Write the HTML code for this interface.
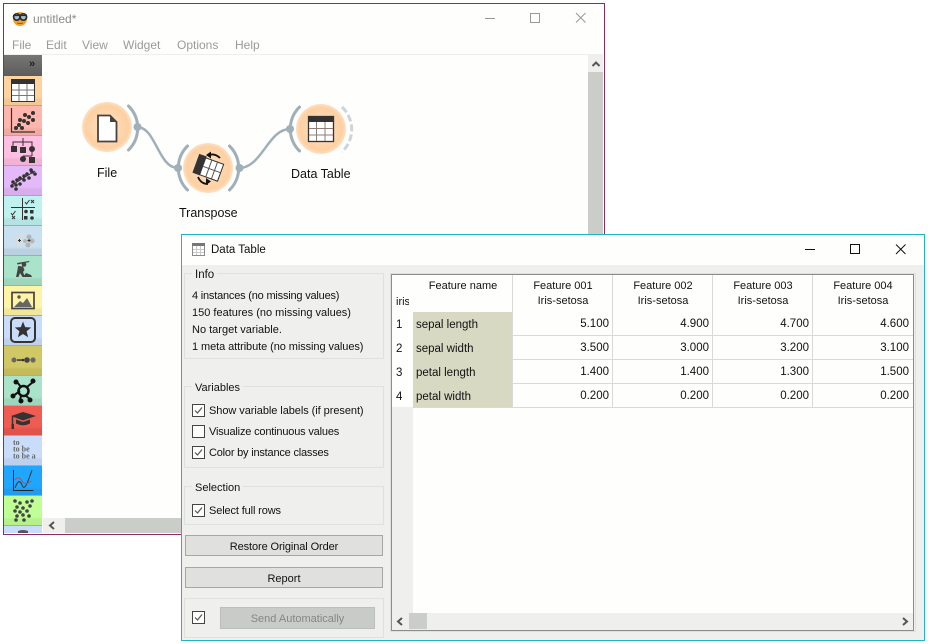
<!DOCTYPE html>
<html><head><meta charset="utf-8"><style>
html,body{margin:0;padding:0;background:#fff}
#r{position:relative;width:928px;height:644px;overflow:hidden;background:#fff;font-family:"Liberation Sans",sans-serif;font-size:11.5px;color:#111}
.a{position:absolute;white-space:nowrap}
.t{position:absolute;left:4px;width:38px;height:30px;box-sizing:border-box;border-bottom:1px solid #a9aaa8}
.box{position:absolute;left:184px;width:198px;border:1px solid #dfe1de;background:#eff0ee}
.lg{position:absolute;background:#eff0ee;padding:0 3px;left:192px;line-height:14px;font-size:11px}
.cb{position:absolute;left:192px;width:11px;height:11px;border:1px solid #444;background:#fdfdfb}
.cb svg{position:absolute;left:0;top:0}
.btn{position:absolute;left:185px;width:196px;height:19px;border:1px solid #a5a7a4;background:#e0e1de;text-align:center;line-height:22px;font-size:11px}
.h{position:absolute;text-align:center;width:100px;line-height:15px;font-size:11px}
.v{position:absolute;text-align:right;width:96px;line-height:14px;font-size:11px}
.m{position:absolute;top:38px;color:#9a9a9a;font-size:12px;line-height:14px}
.l{position:absolute;background:#d9dad8}
.x{position:absolute;white-space:nowrap;line-height:14px;font-size:11px}
.nl{position:absolute;white-space:nowrap;font-size:12.500px;line-height:14px}
</style></head><body><div id="r">

<!-- back window -->
<div class="a" style="left:3px;top:3px;width:600px;height:530px;border:1px solid #8c2c62;background:#fefefc"></div>
<svg class="a" style="left:12px;top:10px" width="17" height="16" viewBox="0 0 17 16"><circle cx="8" cy="9" r="7" fill="#f2a12e"/><circle cx="4.800" cy="7" r="3.200" fill="#9fc4d6" stroke="#2c2c2c" stroke-width="1.700"/><circle cx="11.400" cy="7" r="3.200" fill="#9fc4d6" stroke="#2c2c2c" stroke-width="1.700"/><path d="M1 5.500H15" stroke="#2c2c2c" stroke-width="1.200"/><path d="M5 13q3 1 6 0" stroke="#a4541a" fill="none"/></svg>
<div class="a" style="left:33px;top:12px;font-size:12px;color:#8a8a8a;line-height:14px">untitled*</div>
<div class="m" style="left:12px">File</div>
<div class="m" style="left:46px">Edit</div>
<div class="m" style="left:82px">View</div>
<div class="m" style="left:123px">Widget</div>
<div class="m" style="left:177px">Options</div>
<div class="m" style="left:235px">Help</div>
<div class="a" style="left:4px;top:54px;width:599px;height:1px;background:#eeeeec"></div>
<svg class="a" style="left:480px;top:8px" width="110" height="20" fill="none" stroke="#999"><path d="M5 10.500H15"/><rect x="50.500" y="5.500" width="9" height="9"/><path d="M96 5l9.500 9.500M105.500 5L96 14.500"/></svg>

<!-- canvas scrollbars -->
<div class="a" style="left:588px;top:55px;width:15px;height:17px;background:#eff0ee"></div>
<div class="a" style="left:588px;top:72px;width:15px;height:170px;background:#cbcdc9"></div>
<svg class="a" style="left:591px;top:59px" width="10" height="9"><path d="M1.500 7L5 3.500 8.500 7" fill="none" stroke="#555" stroke-width="2"/></svg>
<div class="a" style="left:43px;top:518px;width:22px;height:15px;background:#eff0ee"></div>
<div class="a" style="left:65px;top:518px;width:118px;height:15px;background:#cbcdc9"></div>
<svg class="a" style="left:47px;top:520px" width="10" height="11"><path d="M7 2L3 5.500 7 9" fill="none" stroke="#555" stroke-width="2"/></svg>

<!-- toolbox -->
<div class="a" style="left:4px;top:55px;width:38px;height:21px;background:linear-gradient(#767674,#5c5c5a)"></div>
<div class="a" style="left:29px;top:58px;font-size:11px;font-weight:bold;color:#222;line-height:12px">»</div>
<div class="t" style="top:76px;background:linear-gradient(#ffd39f 72%,#f4c893 82%)"></div>
<div class="t" style="top:106px;background:linear-gradient(#ffb6ad 72%,#f3aaa1 82%)"></div>
<div class="t" style="top:136px;background:linear-gradient(#ffbfe2 72%,#f2b2d5 82%)"></div>
<div class="t" style="top:166px;background:linear-gradient(#e3b9f9 72%,#d7adec 82%)"></div>
<div class="t" style="top:196px;background:linear-gradient(#bff2ee 72%,#b2e5e1 82%)"></div>
<div class="t" style="top:226px;background:linear-gradient(#c9e0f0 72%,#bbd1e2 82%)"></div>
<div class="t" style="top:256px;background:linear-gradient(#a9e3c9 72%,#9dd6bc 82%)"></div>
<div class="t" style="top:286px;background:linear-gradient(#fdf4a6 72%,#f0e799 82%)"></div>
<div class="t" style="top:316px;background:linear-gradient(#c9ddfb 72%,#bdd1ef 82%)"></div>
<div class="t" style="top:346px;background:linear-gradient(#d0c865 72%,#c3bb59 82%)"></div>
<div class="t" style="top:376px;background:linear-gradient(#a9e3c9 72%,#9dd6bc 82%)"></div>
<div class="t" style="top:406px;background:linear-gradient(#ee5c52 72%,#e0524a 82%)"></div>
<div class="t" style="top:436px;background:linear-gradient(#c9ddfb 72%,#bdd1ef 82%)"></div>
<div class="t" style="top:466px;background:linear-gradient(#1fa6ff 72%,#1d9df1 82%)"></div>
<div class="t" style="top:496px;background:linear-gradient(#c0ff96 72%,#b4f18a 82%)"></div>
<div class="t" style="top:526px;height:7px;background:#c9ddfb;border:0"></div>

<svg class="a" style="left:4px;top:55px" width="38" height="478" viewBox="0 0 38 478">
 <!-- table -->
 <rect x="7.500" y="24.500" width="23" height="22" fill="#fff" stroke="#333"/><rect x="7" y="24" width="24" height="5" fill="#333"/><path d="M15 29V46M23 29V46M8 35H30M8 40.500H30" stroke="#777"/>
 <!-- scatter -->
 <path d="M7.500 53V77H31" fill="none" stroke="#333" stroke-width="1.200"/>
 <g fill="#333"><circle cx="12" cy="73" r="2"/><circle cx="15" cy="70" r="2"/><circle cx="18" cy="73" r="2"/><circle cx="20" cy="66" r="2"/><circle cx="16" cy="65" r="2"/><circle cx="24" cy="68" r="2"/><circle cx="25" cy="62" r="2"/><circle cx="29" cy="65" r="2"/><circle cx="29" cy="58" r="2"/><circle cx="21" cy="60" r="2"/></g>
 <!-- tree -->
 <g fill="#333"><path d="M19 83V87M9 91V87H28V91M19 87V91M28 96V101M19 101H28" stroke="#333" fill="none"/><rect x="7" y="91" width="6" height="6"/><rect x="16" y="92" width="6" height="6"/><circle cx="28" cy="94" r="3"/><circle cx="19" cy="104" r="3"/><rect x="25" y="102" width="6" height="6"/></g>
 <!-- regression -->
 <g fill="#333"><path d="M8 130L31 116" stroke="#333"/><circle cx="9" cy="127" r="1.800"/><circle cx="8" cy="131" r="1.800"/><circle cx="12" cy="130" r="1.800"/><circle cx="13" cy="125" r="1.800"/><circle cx="16" cy="123" r="1.800"/><circle cx="16" cy="129" r="1.800"/><circle cx="20" cy="125" r="1.800"/><circle cx="20" cy="121" r="1.800"/><circle cx="23" cy="119" r="1.800"/><circle cx="25" cy="123" r="1.800"/><circle cx="28" cy="117" r="1.800"/><circle cx="31" cy="119" r="1.800"/><circle cx="27" cy="115" r="1.800"/><circle cx="12" cy="134" r="1.800"/></g>
 <!-- eval -->
 <g><path d="M7 152.500H31M18.500 143V165" stroke="#333"/><path d="M21 147l1.500 2 3-4M7 158l1.500 2 3-4" fill="none" stroke="#333"/><path d="M27 145l3 3M30 145l-3 3M8 161l3 3M11 161l-3 3" stroke="#333"/><circle cx="22" cy="156.500" r="1.800" fill="#333"/><rect x="26" y="155" width="3.500" height="3.500" fill="#333"/><rect x="20" y="161" width="3.500" height="3.500" fill="#333"/><circle cx="28" cy="163" r="1.800" fill="#333"/></g>
 <!-- unsupervised -->
 <g fill="#b5b5b5"><circle cx="15" cy="189" r="2.500" fill="#dcdcdc"/><circle cx="12" cy="184" r="2.500" fill="#dcdcdc"/><circle cx="18" cy="181" r="2.500" fill="#dcdcdc"/><circle cx="25" cy="182" r="2.500"/><circle cx="28" cy="186" r="2.500"/><circle cx="24" cy="190" r="2.500"/><circle cx="21" cy="186" r="2"/></g><path d="M14 185.500h3M23.500 185.500h3M25 184v3M15.500 184v3" stroke="#333"/>
 <!-- digger -->
 <g fill="#444"><circle cx="20" cy="209.500" r="2.300"/><path d="M14 211l5 .5 1.500 3.500-1.500 2 2 5h-2.500l-2.500-4-1.500 4h-2.500l1.500-7z"/><path d="M13 208l12-2 .5 1-12 2.500zM19 222l3-4 5 2 1 2z"/></g>
 <!-- image -->
 <rect x="8" y="237.500" width="22" height="16" fill="#fdf4a6" stroke="#444" stroke-width="1.700"/><path d="M10 252l6-6 3 2 4-5 5 9z" fill="#666"/><circle cx="15" cy="242" r="1.700" fill="#555"/>
 <!-- star -->
 <rect x="7" y="263" width="24" height="24" rx="4" fill="#c9ddfb" stroke="#333" stroke-width="2"/><path d="M19 266.500l2.200 5.600 6 .4-4.600 3.800 1.500 5.900-5.100-3.200-5.100 3.200 1.500-5.900-4.600-3.800 6-.4z" fill="#333"/>
 <!-- dots -->
 <g fill="#666"><circle cx="10" cy="305" r="2.500"/><rect x="13" y="304.300" width="6" height="1.500" fill="#333"/><circle cx="19" cy="305" r="1.300" fill="#333"/><circle cx="23" cy="305" r="2.800" fill="#444"/><circle cx="29" cy="305" r="2.600"/></g>
 <!-- network -->
 <g fill="#111" stroke="#111"><path d="M9 341l7-5M29 327l-6 5M13 327l4 5M22 341l4 3M17 341l-1 4" stroke-width="2"/><circle cx="19.500" cy="336" r="5" fill="none" stroke-width="2.500"/><circle cx="12" cy="327" r="2"/><circle cx="29" cy="326" r="2"/><circle cx="9" cy="341" r="2"/><circle cx="17" cy="346" r="2"/><circle cx="26" cy="345" r="2"/></g>
 <!-- edu -->
 <path d="M7 361l12-4 13 4-13 4.500z" fill="#333"/><path d="M12 364.500v4q7 3.500 14 0v-4l-7 2.500z" fill="#333"/><path d="M8.500 361.500v8" stroke="#333" stroke-width="1.500"/><rect x="7.500" y="369" width="2.500" height="5" fill="#333"/>
 <!-- to be -->
 <text x="9" y="390" font-family="Liberation Serif,serif" font-size="8" font-weight="bold" fill="#666">to</text><text x="9" y="396.500" font-family="Liberation Serif,serif" font-size="8" font-weight="bold" fill="#666">to be</text><text x="9" y="403.500" font-family="Liberation Serif,serif" font-size="8" font-weight="bold" fill="#666">to be a</text>
 <!-- timeseries -->
 <path d="M9.500 415V435.500H29.500" fill="none" stroke="#222"/><path d="M11 433c3-8 5-8 7-3s4 3 10-15" fill="none" stroke="#333"/><path d="M11 425c3-4 5-2 7 1s5 4 9 0" fill="none" stroke="#c04a50"/>
 <!-- bio -->
 <g fill="#444"><circle cx="11" cy="446" r="1.800"/><circle cx="16" cy="448" r="1.800"/><circle cx="23" cy="447" r="1.800"/><circle cx="28" cy="446" r="1.800"/><circle cx="13" cy="452" r="1.800"/><circle cx="19" cy="453" r="1.800"/><circle cx="26" cy="451" r="1.800"/><circle cx="11" cy="456" r="1.800"/><circle cx="16" cy="457" r="1.800"/><circle cx="23" cy="456" r="1.800"/><circle cx="13" cy="461" r="1.800"/><circle cx="19" cy="460" r="1.800"/><circle cx="25" cy="461" r="1.800"/><circle cx="12" cy="465" r="1.800"/><circle cx="20" cy="465" r="1.800"/></g>
 <path d="M14 476q5-2 10 0v2H14z" fill="#555"/>
</svg>

<!-- workflow -->
<svg class="a" style="left:60px;top:85px" width="310" height="150" viewBox="60 85 310 150" fill="none">
 <defs><radialGradient id="g"><stop offset="0.300" stop-color="#ffdcb8"/><stop offset="0.850" stop-color="#fdd0a2"/><stop offset="1" stop-color="#fde0c4"/></radialGradient></defs>
 <g stroke="#9fb0b8" stroke-width="2.500"><path d="M137 127C156 127 158 168 178 168"/><path d="M239 168C262 168 268 129 290 129"/></g>
 <g fill="url(#g)"><circle cx="107" cy="127" r="25"/><circle cx="208" cy="168" r="25"/><circle cx="321" cy="129" r="25"/></g>
 <g stroke="#9fb0b8" stroke-width="3" stroke-linecap="round">
  <path d="M128.500 106a31 31 0 0 1 0 44"/>
  <path d="M187.500 146a31 31 0 0 0 0 44"/>
  <path d="M229.500 146a31 31 0 0 1 0 44"/>
  <path d="M299.500 107a31 31 0 0 0 0 44"/>
 </g>
 <path d="M342 107a31 31 0 0 1 0 45" stroke="#ccd5d8" stroke-width="3" stroke-dasharray="7 3"/>
 <g fill="#9fb0b8"><circle cx="137.500" cy="127" r="4"/><circle cx="178" cy="168" r="4"/><circle cx="239.500" cy="168" r="4"/><circle cx="290" cy="129" r="4"/></g>
 <!-- file icon -->
 <path d="M98 115.500H110L116.500 122V141.500H98Z" fill="#fff" stroke="#444" stroke-width="1.800"/><path d="M110 115V122H117Z" fill="#444"/>
 <!-- transpose -->
 <g transform="rotate(20 209 168)"><rect x="197.500" y="159.500" width="24" height="18" fill="#fff" stroke="#333"/><rect x="195" y="158" width="8" height="20" fill="#333"/><path d="M209 160V177M215 160V177M203 168.500H221" stroke="#555"/></g>
 <path d="M209 155q6-2 11 3" stroke="#111" stroke-width="1.800"/><path d="M211 151.500v7l-5-3.500zM206 185v-7l5 3.500z" fill="#111"/><path d="M198 177q3 7 10 7" stroke="#111" stroke-width="1.800"/>
 <!-- table -->
 <rect x="308.500" y="116.500" width="25" height="25" fill="#fff" stroke="#333" stroke-width="1.300"/><rect x="308" y="116" width="26" height="6" fill="#333"/><path d="M316.500 122V141M325 122V141M309 128.500H333M309 135H333" stroke="#8a7f7a"/>
</svg>
<div class="nl" style="left:97px;top:166px">File</div>
<div class="nl" style="left:179px;top:206px">Transpose</div>
<div class="nl" style="left:291px;top:167px">Data Table</div>

<!-- front window -->
<div class="a" style="left:181px;top:234px;width:742px;height:405px;border:1px solid #1fb6c4;background:#eff0ee"></div>
<div class="a" style="left:182px;top:235px;width:742px;height:30px;background:#fefefc"></div>
<svg class="a" style="left:192px;top:243px" width="13" height="13"><rect x=".5" y=".5" width="12" height="12" fill="#fff" stroke="#8a8a8a"/><rect x="0" y="0" width="13" height="3" fill="#777"/><path d="M4.500 3V12M8.500 3V12M1 6.500H12M1 9.500H12" stroke="#c9c9c9"/></svg>
<div class="a" style="left:211px;top:243px;font-size:11.500px;line-height:14px">Data Table</div>
<svg class="a" style="left:800px;top:240px" width="110" height="20" fill="none" stroke="#111"><path d="M5 9.500H15"/><rect x="50.500" y="4.500" width="9" height="9"/><path d="M96 4.500l9.500 9.500M105.500 4.500L96 14"/></svg>

<!-- left panel -->
<div class="box" style="top:273px;height:84px"></div>
<div class="lg" style="top:268px;font-size:11.500px">Info</div>
<div class="x" style="left:192px;top:289px;letter-spacing:-.2px">4 instances (no missing values)</div>
<div class="x" style="left:192px;top:306px">150 features (no missing values)</div>
<div class="x" style="left:192px;top:323px">No target variable.</div>
<div class="x" style="left:192px;top:340px;letter-spacing:-.08px">1 meta attribute (no missing values)</div>

<div class="box" style="top:386px;height:80px"></div>
<div class="lg" style="top:381px">Variables</div>
<div class="cb" style="top:404px"><svg width="11" height="11"><path d="M2 5.500L4.500 8 9 2.500" fill="none" stroke="#555" stroke-width="1.200"/></svg></div>
<div class="x" style="left:209px;top:404px;letter-spacing:-.06px">Show variable labels (if present)</div>
<div class="cb" style="top:425px"></div>
<div class="x" style="left:209px;top:425px;letter-spacing:-.18px">Visualize continuous values</div>
<div class="cb" style="top:446px"><svg width="11" height="11"><path d="M2 5.500L4.500 8 9 2.500" fill="none" stroke="#555" stroke-width="1.200"/></svg></div>
<div class="x" style="left:209px;top:446px;letter-spacing:-.2px">Color by instance classes</div>

<div class="box" style="top:486px;height:37px"></div>
<div class="lg" style="top:481px">Selection</div>
<div class="cb" style="top:504px"><svg width="11" height="11"><path d="M2 5.500L4.500 8 9 2.500" fill="none" stroke="#555" stroke-width="1.200"/></svg></div>
<div class="x" style="left:209px;top:504px;letter-spacing:-.13px">Select full rows</div>

<div class="btn" style="top:535px;letter-spacing:-.1px">Restore Original Order</div>
<div class="btn" style="top:567px">Report</div>
<div class="box" style="top:598px;height:38px"></div>
<div class="cb" style="top:611px"><svg width="11" height="11"><path d="M2 5.500L4.500 8 9 2.500" fill="none" stroke="#555" stroke-width="1.200"/></svg></div>
<div class="a" style="left:220px;top:607px;width:153px;height:20px;border:1px solid #bcbebb;background:#c9cbc8;text-align:center;line-height:22px;color:#858785;font-size:11px">Send Automatically</div>

<!-- table -->
<div class="a" style="left:390px;top:273px;width:524px;height:357px;border:1px solid #dfe1de"></div>
<div class="a" style="left:391px;top:274px;width:521px;height:355px;border:1px solid #8b8d8b;background:#fefefc"></div>
<div class="a" style="left:392px;top:407px;width:21px;height:206px;background:#eff0ee"></div>
<div class="a" style="left:392px;top:613px;width:521px;height:17px;background:#eff0ee"></div>
<div class="a" style="left:409px;top:613px;width:18px;height:16px;background:#cbcdc9"></div>
<svg class="a" style="left:395px;top:616px" width="10" height="11"><path d="M7 2L3 5.500 7 9" fill="none" stroke="#555" stroke-width="2"/></svg>
<svg class="a" style="left:900px;top:616px" width="10" height="11"><path d="M3 2L7 5.500 3 9" fill="none" stroke="#555" stroke-width="2"/></svg>
<div class="x" style="left:396px;top:295px;width:13px;overflow:hidden">iris</div>
<div class="a" style="left:413px;top:312px;width:99px;height:95px;background:#d7d9c3"></div>
<div class="l" style="left:512px;top:275px;width:1px;height:132px"></div>
<div class="l" style="left:612px;top:275px;width:1px;height:132px"></div>
<div class="l" style="left:712px;top:275px;width:1px;height:132px"></div>
<div class="l" style="left:812px;top:275px;width:1px;height:132px"></div>
<div class="l" style="left:513px;top:335px;width:400px;height:1px"></div>
<div class="l" style="left:513px;top:359px;width:400px;height:1px"></div>
<div class="l" style="left:513px;top:383px;width:400px;height:1px"></div>
<div class="l" style="left:413px;top:407px;width:500px;height:1px"></div>

<div class="h" style="left:413px;top:279px">Feature name</div>
<div class="h" style="left:513px;top:279px">Feature 001<br>Iris-setosa</div>
<div class="h" style="left:613px;top:279px">Feature 002<br>Iris-setosa</div>
<div class="h" style="left:713px;top:279px">Feature 003<br>Iris-setosa</div>
<div class="h" style="left:813px;top:279px">Feature 004<br>Iris-setosa</div>

<div class="x" style="left:396px;top:318px;font-size:11.500px">1</div>
<div class="x" style="left:396px;top:342px;font-size:11.500px">2</div>
<div class="x" style="left:396px;top:366px;font-size:11.500px">3</div>
<div class="x" style="left:396px;top:390px;font-size:11.500px">4</div>
<div class="x" style="left:416px;top:318px;font-size:11.500px">sepal length</div>
<div class="x" style="left:416px;top:342px;font-size:11.500px">sepal width</div>
<div class="x" style="left:416px;top:366px;font-size:11.500px">petal length</div>
<div class="x" style="left:416px;top:390px;font-size:11.500px">petal width</div>

<div class="v" style="left:513px;top:317px;font-size:11.500px">5.100</div><div class="v" style="left:613px;top:317px;font-size:11.500px">4.900</div><div class="v" style="left:713px;top:317px;font-size:11.500px">4.700</div><div class="v" style="left:813px;top:317px;font-size:11.500px">4.600</div>
<div class="v" style="left:513px;top:341px;font-size:11.500px">3.500</div><div class="v" style="left:613px;top:341px;font-size:11.500px">3.000</div><div class="v" style="left:713px;top:341px;font-size:11.500px">3.200</div><div class="v" style="left:813px;top:341px;font-size:11.500px">3.100</div>
<div class="v" style="left:513px;top:365px;font-size:11.500px">1.400</div><div class="v" style="left:613px;top:365px;font-size:11.500px">1.400</div><div class="v" style="left:713px;top:365px;font-size:11.500px">1.300</div><div class="v" style="left:813px;top:365px;font-size:11.500px">1.500</div>
<div class="v" style="left:513px;top:389px;font-size:11.500px">0.200</div><div class="v" style="left:613px;top:389px;font-size:11.500px">0.200</div><div class="v" style="left:713px;top:389px;font-size:11.500px">0.200</div><div class="v" style="left:813px;top:389px;font-size:11.500px">0.200</div>
</div></body></html>
